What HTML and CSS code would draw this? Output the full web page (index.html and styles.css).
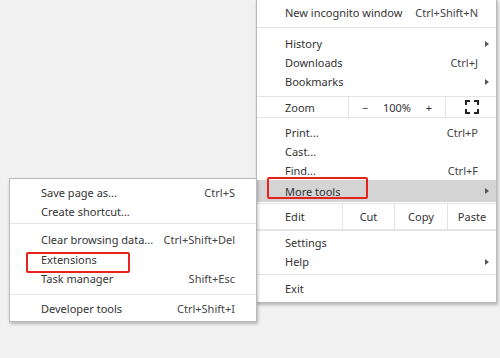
FILE: index.html
```html
<!DOCTYPE html>
<html lang="en">
<head>
  <meta charset="UTF-8" />
  <title>Chrome menu - More tools</title>
  <link rel="stylesheet" href="styles.css">
</head>
<body>

  <div class="desktop">

    <!-- Main Chrome menu -->
    <div class="menu main-menu">
      <div class="section first">
        <div class="item"><span>New incognito window</span><span class="key">Ctrl+Shift+N</span></div>
      </div>
      <div class="section">
        <div class="item"><span>History</span><span class="arrow"></span></div>
        <div class="item"><span>Downloads</span><span class="key">Ctrl+J</span></div>
        <div class="item"><span>Bookmarks</span><span class="arrow"></span></div>
      </div>
      <div class="row zoom-row">
        <div class="cell label">Zoom</div>
        <div class="cell zoom-ctl"><span>&minus;</span><span>100%</span><span>+</span></div>
        <div class="cell full">
          <svg width="14" height="14" viewBox="0 0 14 14" fill="none" stroke="#222" stroke-width="2">
            <path d="M1 5V1H5M9 1H13V5M13 9V13H9M5 13H1V9" />
          </svg>
        </div>
      </div>
      <div class="section tools">
        <div class="item"><span>Print...</span><span class="key">Ctrl+P</span></div>
        <div class="item"><span>Cast...</span></div>
        <div class="item"><span>Find...</span><span class="key">Ctrl+F</span></div>
        <div class="item active"><span>More tools</span><span class="arrow"></span></div>
      </div>
      <div class="row edit-row">
        <div class="cell label">Edit</div>
        <div class="cell">Cut</div>
        <div class="cell">Copy</div>
        <div class="cell">Paste</div>
      </div>
      <div class="section settings">
        <div class="item"><span>Settings</span></div>
        <div class="item"><span>Help</span><span class="arrow"></span></div>
      </div>
      <div class="section exit">
        <div class="item"><span>Exit</span></div>
      </div>
      <div class="mark mark-more"></div>
    </div>

    <!-- More tools submenu -->
    <div class="menu sub-menu">
      <div class="section first">
        <div class="item"><span>Save page as...</span><span class="key">Ctrl+S</span></div>
        <div class="item"><span>Create shortcut...</span></div>
      </div>
      <div class="section mid">
        <div class="item"><span>Clear browsing data...</span><span class="key">Ctrl+Shift+Del</span></div>
        <div class="item"><span>Extensions</span></div>
        <div class="item"><span>Task manager</span><span class="key">Shift+Esc</span></div>
      </div>
      <div class="section last">
        <div class="item"><span>Developer tools</span><span class="key">Ctrl+Shift+I</span></div>
      </div>
      <div class="mark mark-ext"></div>
    </div>

  </div>

</body>
</html>
```

FILE: styles.css
```css
/* Reset */
* {
  box-sizing: border-box;
  margin: 0;
  padding: 0;
}
body {
  font-family: 'Noto Sans', 'Open Sans', sans-serif;
  font-size: 11px;
  color: #333;
  background: #f1f1f1;
  width: 500px;
  height: 358px;
  overflow: hidden;
}

.desktop {
  position: relative;
  width: 500px;
  height: 358px;
}

/* Menus */
.menu {
  position: absolute;
  background: #fff;
  border: 1px solid #b9b9b9;
  box-shadow: 1px 2px 3px #00000040;
}
.main-menu {
  left: 256px;
  top: -1px;
  width: 241px;
  height: 304px;
}
.sub-menu {
  left: 9px;
  top: 178px;
  width: 248px;
  height: 144px;
  z-index: 2;
}

.section {
  border-top: 1px solid #e4e4e4;
}
.section.first {
  border-top: none;
}

.item {
  height: 19px;
  display: flex;
  align-items: center;
  justify-content: space-between;
  padding: 0 18px 0 28px;
  white-space: nowrap;
}
.key {
  color: #444;
}
.arrow {
  width: 0;
  height: 0;
  border-top: 3.5px solid transparent;
  border-bottom: 3.5px solid transparent;
  border-left: 4px solid #555;
  margin-right: -11px;
}

/* Main menu sections */
.main-menu .section.first {
  padding: 3px 0 5px;
}
.main-menu .section:nth-child(2) {
  padding: 6px 0 5px;
}
.main-menu .tools {
  padding-top: 5px;
}
.main-menu .item.active {
  background: #d4d4d4;
  height: 22px;
}
.main-menu .settings {
  padding: 2px 0 3px;
}
.main-menu .exit {
  padding: 4px 0 3px;
}

/* Zoom / edit rows */
.row {
  display: grid;
  border-top: 1px solid #e4e4e4;
}
.row .cell {
  display: flex;
  align-items: center;
  justify-content: center;
  border-left: 1px solid #e4e4e4;
}
.row .cell.label {
  justify-content: flex-start;
  padding-left: 28px;
  border-left: none;
}
.zoom-row {
  grid-template-columns: 91px 97px 1fr;
  height: 21px;
}
.zoom-ctl span {
  width: 32px;
  text-align: center;
}
.full {
  padding-left: 2px;
}
.edit-row {
  grid-template-columns: 85px 52px 53px 1fr;
  height: 27px;
  border-bottom: 1px solid #e4e4e4;
  margin-top: 1px;
}

/* Submenu sections */
.sub-menu .item {
  padding: 0 21px 0 31px;
}
.sub-menu .section.first {
  padding: 4px 0 2px;
}
.sub-menu .mid {
  padding: 6px 0 5px;
}
.sub-menu .mid .item {
  height: 19.5px;
}
.sub-menu .last {
  padding-top: 4px;
}

/* Red highlight boxes */
.mark {
  position: absolute;
  border: 2px solid #e5231b;
  border-radius: 2px;
}
.mark-more {
  left: 10px;
  top: 177px;
  width: 101px;
  height: 22px;
}
.mark-ext {
  left: 16px;
  top: 73px;
  width: 104px;
  height: 21px;
}
```
